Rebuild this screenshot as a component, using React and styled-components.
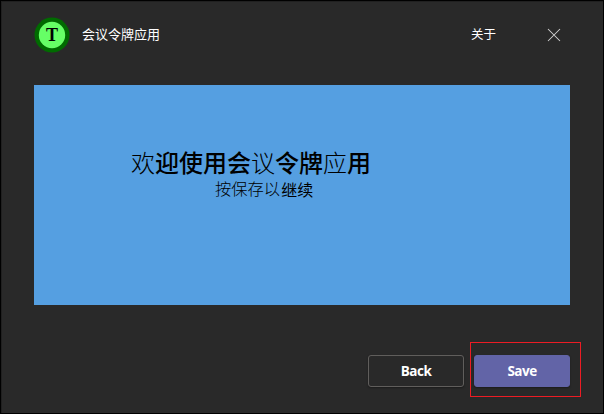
import React from "react";
import styled, { createGlobalStyle } from "styled-components";

const GlobalStyle = createGlobalStyle`
  *, *::before, *::after { box-sizing: border-box; }
  body { margin: 0; background: #000; }
`;

const Dialog = styled.main`
  width: 604px;
  height: 414px;
  padding: 0 33px;
  border: 1px solid #000;
  background: #292929;
  box-shadow: inset 1px 1px 0 #202020;
  display: flex;
  flex-direction: column;
  color: #fff;
  font-family: "Open Sans", "Noto Sans CJK SC", sans-serif;
  overflow: hidden;
`;

const Header = styled.header`
  height: 84px;
  flex: none;
  padding: 16px 9px 0 0;
  display: flex;
  align-items: flex-start;
`;

const Logo = styled.svg`
  width: 36px;
  height: 36px;
  display: block;
`;

const AppName = styled.h1`
  margin: 8px auto 0 12px;
  font-family: "Noto Sans CJK SC", sans-serif;
  font-size: 13px;
  font-weight: 400;
  line-height: 18px;
`;

const HeaderLink = styled.button`
  margin: 8px 51px 0 0;
  padding: 0;
  border: 0;
  background: none;
  color: #fff;
  font-family: "Noto Sans CJK SC", sans-serif;
  font-size: 12.5px;
  line-height: 17px;
`;

const CloseButton = styled.button`
  width: 14px;
  height: 14px;
  margin: 11px 0 0;
  padding: 0;
  border: 0;
  background: none;
  svg { display: block; }
`;

const Stage = styled.section`
  height: 220px;
  flex: none;
  background: #559fe1;
  color: #000;
  font-family: "Liberation Sans", "Noto Sans CJK SC", sans-serif;
`;

const Title = styled.h2`
  margin: 0;
  padding: 63px 0 0 97px;
  font-family: "Liberation Sans", "Noto Sans CJK SC Medium", "Noto Sans CJK SC", sans-serif;
  font-size: 24px;
  font-weight: 500;
  line-height: 32px;
  white-space: nowrap;
`;

const Thin = styled.span`
  font-family: "Noto Sans CJK SC", sans-serif;
  font-weight: 300;
  line-height: 1;
`;

const Hint = styled.p`
  margin: 0;
  padding-left: 181px;
  display: flex;
  font-size: 16.3px;
  font-weight: 300;
  line-height: 18px;
`;

const HintAction = styled.span`
  margin: 2px 0 0 1px;
  font-size: 16px;
  font-weight: 400;
`;

const Footer = styled.footer`
  margin: 37px -11px 0 0;
  display: flex;
  justify-content: flex-end;
  align-items: center;
  gap: 6px;
`;

const Highlight = styled.div`
  width: 111px;
  height: 55px;
  border: 1px solid #ed1c24;
  display: flex;
  align-items: center;
  padding: 3px 0 0 3px;
`;

const Button = styled.button`
  width: 96px;
  height: 32px;
  margin-top: ${(p) => (p.$primary ? "0" : "3px")};
  padding: 0;
  border: 1px solid ${(p) => (p.$primary ? "#6264a7" : "#605e5c")};
  border-radius: 3px;
  background: ${(p) => (p.$primary ? "#6264a7" : "#292929")};
  box-shadow: 0 1px 2px rgba(0, 0, 0, 0.35);
  color: #fff;
  font-family: "Open Sans", sans-serif;
  font-size: 13.5px;
  font-weight: 700;
  letter-spacing: -0.5px;
  line-height: 20px;
`;

export default function App() {
  return (
    <>
      <GlobalStyle />
      <Dialog>
        <Header>
          <Logo viewBox="0 0 36 36" aria-hidden="true">
            <circle cx="18" cy="18" r="17.5" fill="#006b00" />
            <circle cx="18" cy="18" r="13.2" fill="#66ff66" />
            <text x="18" y="24" textAnchor="middle" fontFamily="Liberation Serif, serif" fontSize="18" fontWeight="700">T</text>
          </Logo>
          <AppName>会议令牌应用</AppName>
          <HeaderLink>关于</HeaderLink>
          <CloseButton aria-label="Close">
            <svg width="14" height="14" viewBox="0 0 14 14" fill="none" stroke="#d2d2d2" strokeWidth="1.05">
              <path d="M1 1 13 13M13 1 1 13" />
            </svg>
          </CloseButton>
        </Header>
        <Stage>
          <Title>
            <Thin>欢</Thin>迎使用会<Thin>议</Thin>令牌<Thin>应</Thin>用
          </Title>
          <Hint>
            按保存以<HintAction>继续</HintAction>
          </Hint>
        </Stage>
        <Footer>
          <Button>Back</Button>
          <Highlight>
            <Button $primary>Save</Button>
          </Highlight>
        </Footer>
      </Dialog>
    </>
  );
}
